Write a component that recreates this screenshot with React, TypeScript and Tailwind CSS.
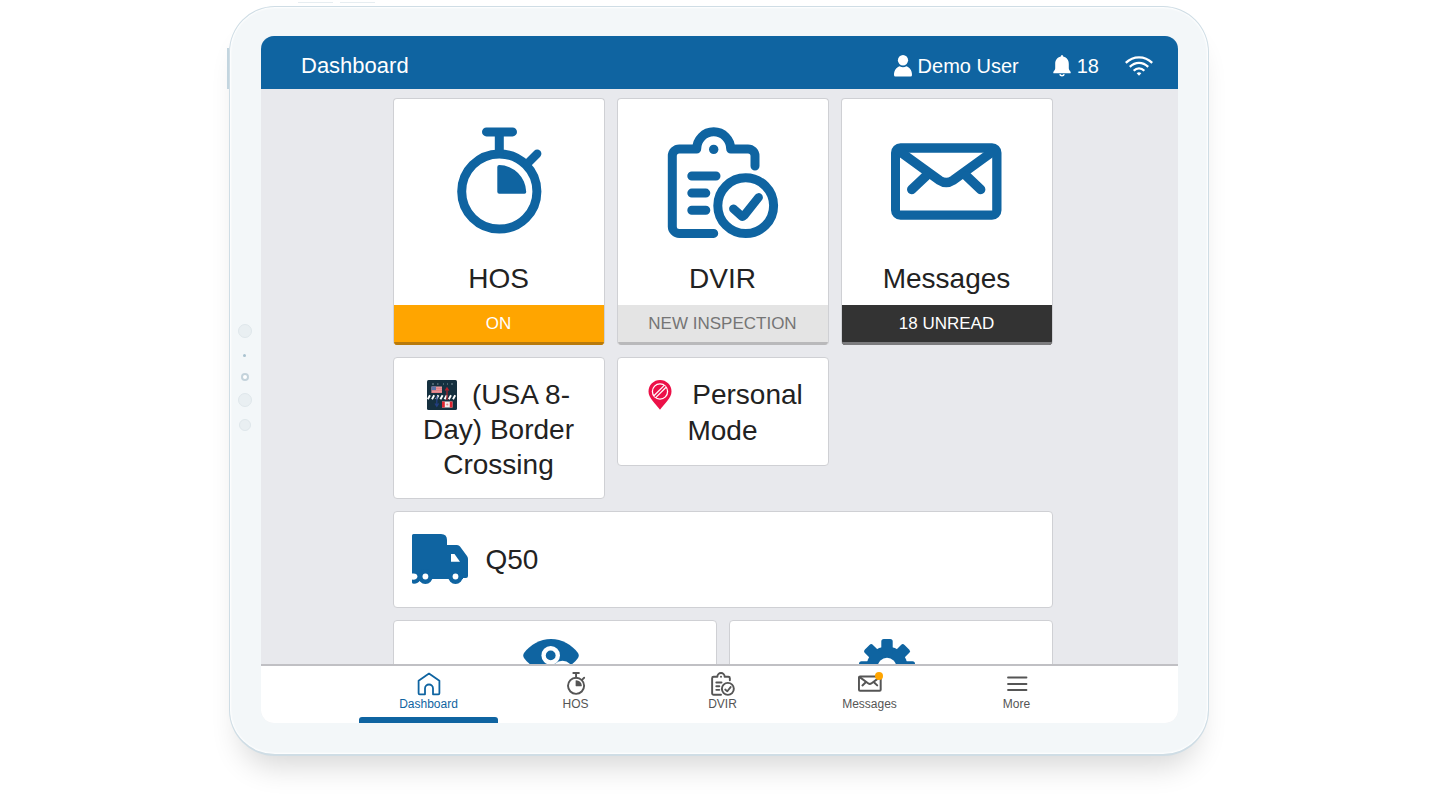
import type { ReactNode } from "react";

type IconProps = { className?: string };

function StopwatchIcon({ className }: IconProps) {
  return (
    <svg viewBox="0 0 112 112" className={className} fill="none" stroke="currentColor" strokeLinecap="round" aria-hidden="true">
      <circle cx="56.3" cy="64.5" r="37.6" strokeWidth="9" />
      <path d="M43.5 4.9H69.5M56.3 5V26" strokeWidth="9" />
      <path d="M94.2 26.8L84 37" strokeWidth="8.4" />
      <path d="M56.3 38Q54.3 38 54.3 40V64.7Q54.3 66.7 56.3 66.7H81.5Q83.4 66.7 83.2 64.6A27.6 27.6 0 0 0 56.3 38Z" fill="currentColor" stroke="none" />
    </svg>
  );
}

function ClipboardIcon({ className }: IconProps) {
  return (
    <svg viewBox="0 0 112 112" className={className} fill="none" stroke="currentColor" strokeWidth="9" strokeLinecap="round" strokeLinejoin="round" aria-hidden="true">
      <path d="M46.7 106.4H12.3a7 7 0 0 1-7-7V29a7 7 0 0 1 7-7H29.7a17 17.2 0 0 1 34 0H81a7 7 0 0 1 7 7V39" />
      <circle cx="46.7" cy="22.4" r="4.7" fill="currentColor" stroke="none" />
      <path d="M24.8 49H49M24.8 66.1H38.8M24.8 83.3H38.8" />
      <circle cx="78.7" cy="78.7" r="27.9" />
      <path d="M66.4 81.8L74.5 89Q75.8 90 77 88.7L91.6 70.4" strokeWidth="8.6" />
    </svg>
  );
}

function EnvelopeIcon({ className }: IconProps) {
  return (
    <svg viewBox="0 0 112 112" className={className} fill="none" stroke="currentColor" strokeWidth="9.4" strokeLinecap="round" aria-hidden="true">
      <path
        fill="currentColor"
        stroke="none"
        fillRule="evenodd"
        d="M9.5 16.3H101a9.5 9.5 0 0 1 9.5 9.5V83.2a9.5 9.5 0 0 1-9.5 9.5H9.5a9.5 9.5 0 0 1-9.5-9.5V25.8A9.5 9.5 0 0 1 9.5 16.3ZM9 25.8V83.4H101.2V25.8Z"
      />
      <path d="M8 24L48.5 53.4Q55.2 57.8 62 53.4L102.5 24" />
      <path d="M20.7 62.5L35 49M89.7 62.5L75.5 49" />
    </svg>
  );
}

function HomeIcon({ className }: IconProps) {
  return (
    <svg viewBox="0 0 24 24" className={className} fill="none" stroke="currentColor" strokeWidth="1.8" strokeLinejoin="round" aria-hidden="true">
      <path d="M1.6 8.8L12 1.6L22.4 8.8V21.2Q22.4 22.3 21.3 22.3H16V16.5A4 4 0 0 0 8 16.5V22.3H2.7Q1.6 22.3 1.6 21.2Z" />
    </svg>
  );
}

function MenuIcon({ className }: IconProps) {
  return (
    <svg viewBox="0 0 24 24" className={className} stroke="currentColor" strokeWidth="1.8" strokeLinecap="round" aria-hidden="true">
      <path d="M3 5.5H21.5M3 12H21.5M3 18H21.5" />
    </svg>
  );
}

function UserIcon({ className }: IconProps) {
  return (
    <svg viewBox="0 0 18 22" className={className} fill="currentColor" aria-hidden="true">
      <ellipse cx="9" cy="5.3" rx="5.1" ry="5.3" />
      <path d="M0 20C0 15.4 2.4 12.3 5.6 11.3Q9 13 12.4 11.3C15.600 12.3 18 15.4 18 20Q18 21.500 16.600 21.500H1.400Q0 21.500 0 20Z" />
    </svg>
  );
}

function BellIcon({ className }: IconProps) {
  return (
    <svg viewBox="0 0 18 22" className={className} fill="currentColor" aria-hidden="true">
      <path d="M9 0Q10.2 0 10.2 1.6C14 2.4 15.8 5.4 15.8 9V13.5Q15.9 15.2 17.4 16.6Q18 17.4 17.6 18.3H.4Q0 17.4.6 16.6Q2.1 15.2 2.2 13.5V9C2.2 5.4 4 2.4 7.8 1.6Q7.8 0 9 0Z" />
      <path d="M6.8 19.3A2.3 2.2 0 0 0 11.2 19.3" fill="none" stroke="currentColor" strokeWidth="1.5" />
    </svg>
  );
}

function WifiIcon({ className }: IconProps) {
  return (
    <svg viewBox="0 0 28 20" className={className} fill="none" stroke="currentColor" strokeWidth="2.3" aria-hidden="true">
      <path d="M.8 6.8Q6.5 1.3 14 1.3T27.2 6.8M4.8 10.8Q9 6.8 14 6.8T23.2 10.8M8.7 14.7Q11 12.3 14 12.3T19.3 14.7" />
      <path d="M11.7 17.3Q14 15.2 16.3 17.3L14 19.7Z" fill="currentColor" stroke="none" />
    </svg>
  );
}

function BorderIcon({ className }: IconProps) {
  return (
    <svg viewBox="0 0 30 30" className={className} aria-hidden="true">
      <rect width="30" height="30" rx="1.5" fill="#15303f" />
      <path d="M5 4H7M10 4H11.5M16 4H17M20 4H21M24 4H26" stroke="#7f929c" strokeWidth="1" />
      <rect x="4.5" y="6.5" width="10.5" height="6.5" fill="#f0a3a6" />
      <path d="M4.5 8.2H15M4.5 10.2H15M4.5 12.2H15" stroke="#d9646c" strokeWidth=".8" />
      <rect x="4.5" y="6.5" width="4.5" height="3.6" fill="#5b74a8" />
      <path d="M.8 19.2L3 15.2M5 19.2L7.2 15.2M9.2 19.2L11.4 15.2M13.4 19.2L15.6 15.2M17.6 19.2L19.8 15.2M21.8 19.2L24 15.2M26 19.2L28.2 15.2" stroke="#fff" strokeWidth="1.9" />
      <path d="M20 20V9M18.3 10.5L20 7.8L21.7 10.5" stroke="#b3202b" strokeWidth="1.2" fill="none" />
      <path d="M9.8 16V26M8 23.5L9.8 26.3L11.6 23.5" stroke="#233f80" strokeWidth="1.3" fill="none" />
      <rect x="15" y="21.5" width="10.5" height="6" fill="#f5eeee" />
      <path d="M15 21.5H17.8V27.5H15ZM22.8 21.5H25.5V27.5H22.8Z" fill="#dd2430" />
      <circle cx="20.3" cy="24.5" r="1.1" fill="#e8888e" />
    </svg>
  );
}

function PinIcon({ className }: IconProps) {
  return (
    <svg viewBox="-3 0 30 30" className={className} aria-hidden="true">
      <path d="M15 0A11.5 11.5 0 0 1 26.5 11.5C26.5 18 19.5 23.5 15 29.7C10.5 23.5 3.5 18 3.5 11.5A11.5 11.5 0 0 1 15 0Z" fill="#ec1148" />
      <g fill="none" stroke="#fff">
        <circle cx="15" cy="11.5" r="7.6" strokeWidth="1.3" />
        <path d="M20.2 6.3L9.8 16.7" strokeWidth="3.8" />
        <path d="M20.2 6.3L9.8 16.7" stroke="#ec1148" strokeWidth="1.4" />
      </g>
    </svg>
  );
}

function TruckIcon({ className }: IconProps) {
  return (
    <svg viewBox="0 0 56 50" className={className} fill="currentColor" aria-hidden="true">
      <path d="M0 1.5Q0 0 1.5 0H29Q35 0 35 6V11H45Q47 11 48 12.5L55 22Q56 23.3 56 25V42Q56 44 54 44H51V45H0Z" />
      <circle cx="13.4" cy="42.5" r="7.4" />
      <circle cx="43.5" cy="42.5" r="7.4" />
      <path d="M0 45H8.5V46Q6 49.800 2 49.800Q0 49.800 0 48.500Z" />
      <path d="M39 20H42.5L48 27.7H39Z" fill="#fff" />
      <path d="M0 39.6Q5.400 39 5.400 42.500T0 45.600Z" fill="#fff" />
      <circle cx="13.4" cy="42.5" r="2.9" fill="#fff" />
      <circle cx="43.5" cy="42.5" r="2.9" fill="#fff" />
      <path d="M5.5 50L7.7 47.3L10 50Z" fill="#fff" />
    </svg>
  );
}

function EyeIcon({ className }: IconProps) {
  return (
    <svg viewBox="0 0 56 40" className={className} fill="currentColor" aria-hidden="true">
      <path d="M28 0C39 0 49 6 55 14Q56.5 16.5 55 19C49 27 39 33 28 33S7 27 1 19Q-.5 16.5 1 14C7 6 17 0 28 0Z" />
      <circle cx="27.7" cy="16.4" r="9.3" fill="#fff" />
      <circle cx="27.7" cy="16.4" r="4.9" />
      <circle cx="39.5" cy="32" r="10.3" fill="#fff" />
    </svg>
  );
}

function GearIcon({ className }: IconProps) {
  return (
    <svg viewBox="0 0 56 56" className={className} fill="currentColor" aria-hidden="true">
      <circle cx="28" cy="28" r="20.5" />
      {[0, 45, 90, 135].map((angle) => (
        <rect key={angle} x="22.3" y="0" width="11.4" height="56" rx="2.5" transform={`rotate(${angle} 28 28)`} />
      ))}
      <circle cx="28" cy="28" r="9.3" fill="#fff" />
    </svg>
  );
}

const cardFrame = "rounded-[4px] border border-[#cfd0d4] bg-white";

function FeatureCard({ icon, title, status, statusStyle }: { icon: ReactNode; title: string; status: string; statusStyle: string }) {
  return (
    <button type="button" className="flex flex-col overflow-hidden rounded-[4px] border border-b-0 border-[#cfd0d4] bg-white pt-7 text-center">
      <span className="flex justify-center text-[#0f64a1]">{icon}</span>
      <span className="mt-[22px] mb-[9px] block w-full text-[28px] leading-[35px]">{title}</span>
      <span className={`block w-full border-b-3 text-[17px] leading-[37px] ${statusStyle}`}>{status}</span>
    </button>
  );
}

const navItems = [
  { label: "Dashboard", Icon: HomeIcon, active: true, badge: false },
  { label: "HOS", Icon: StopwatchIcon, active: false, badge: false },
  { label: "DVIR", Icon: ClipboardIcon, active: false, badge: false },
  { label: "Messages", Icon: EnvelopeIcon, active: false, badge: true },
  { label: "More", Icon: MenuIcon, active: false, badge: false },
];

export default function App() {
  return (
    <div className="flex h-screen justify-center overflow-hidden bg-white pt-1.5 pr-0.5 pb-[54px] font-['Liberation_Sans',Arial,sans-serif] text-[#222]">
      <div className="relative flex w-full max-w-[980px] rounded-[46px] border border-b-2 border-[#cfdde5] bg-[#f3f7f9] pt-[29px] pr-[30px] pb-[31px] shadow-[inset_0_0_2px_1px_#ffffff,0_22px_30px_-12px_rgba(0,0,0,0.16)]">
        <span className="absolute top-[41px] -left-[3px] h-[41px] w-0.5 bg-[#c3d5df]" />
        <span className="absolute -top-[5px] left-[68px] h-px w-[35px] bg-[#e6edf1]" />
        <span className="absolute -top-[5px] left-[110px] h-px w-[35px] bg-[#e6edf1]" />

        <div className="flex w-[31px] shrink-0 flex-col items-center justify-center gap-3 pr-0.5 pb-1" aria-hidden="true">
          <span className="size-3.5 rounded-full border border-[#dfe7eb] bg-[#e9eff2]" />
          <span className="my-1 size-[3px] rounded-full bg-[#a9c2cf]" />
          <span className="size-2 rounded-full border-2 border-[#c4d3db] bg-white" />
          <span className="size-3.5 rounded-full border border-[#dfe7eb] bg-[#e9eff2]" />
          <span className="size-3 rounded-full border border-[#dfe7eb] bg-[#e9eff2]" />
        </div>

        <div className="flex min-w-0 flex-1 flex-col overflow-hidden rounded-[13px] bg-[#e8e9ed]">
          <header className="flex h-[53px] shrink-0 items-center bg-[#0f64a1] pt-[7px] pr-[25px] pl-10 text-xl text-white">
            <h1 className="text-[22px]">Dashboard</h1>
            <button type="button" className="ml-auto flex items-center gap-1.5">
              <UserIcon className="h-[22px] w-[18px]" />
              Demo User
            </button>
            <button type="button" aria-label="18 notifications" className="ml-[34px] flex items-center gap-1.5">
              <BellIcon className="h-[22px] w-[18px]" />
              18
            </button>
            <WifiIcon className="ml-[26px] h-5 w-7" />
          </header>

          <main className="min-h-0 flex-1 overflow-y-auto pt-[9px] pl-1.5 [scrollbar-width:none]">
            <div className="mx-auto flex max-w-[660px] flex-col gap-3">
              <div className="grid grid-cols-3 gap-3">
                <FeatureCard icon={<StopwatchIcon className="size-28" />} title="HOS" status="ON" statusStyle="border-[#b87a0c] bg-[#ffa500] text-white" />
                <FeatureCard icon={<ClipboardIcon className="size-28" />} title="DVIR" status="NEW INSPECTION" statusStyle="border-[#b9b9bb] bg-[#e4e4e4] text-[#757575]" />
                <FeatureCard icon={<EnvelopeIcon className="size-28" />} title="Messages" status="18 UNREAD" statusStyle="border-[#7c7c7e] bg-[#333] text-white" />
              </div>

              <div className="grid grid-cols-3 items-start gap-3">
                <button type="button" className={`px-4 pt-[19px] pb-4 text-[28px] leading-[35px] ${cardFrame}`}>
                  <BorderIcon className="mr-[15px] inline-block size-[30px] align-[-6px]" />
                  (USA 8-Day) Border Crossing
                </button>
                <button type="button" className={`px-4 pt-[19px] pb-4 text-[28px] leading-9 ${cardFrame}`}>
                  <PinIcon className="mr-5 inline-block size-[30px] align-[-6px]" />
                  Personal Mode
                </button>
              </div>

              <button type="button" className={`flex h-[97px] items-center gap-[18px] px-[18px] text-[28px] ${cardFrame}`}>
                <TruckIcon className="mb-0.5 h-[50px] w-14 text-[#0f64a1]" />
                Q50
              </button>

              <div className="grid grid-cols-2 gap-3 pb-3">
                <button type="button" aria-label="View" className={`flex h-24 justify-center pt-[18px] pr-2 text-[#0f64a1] ${cardFrame}`}>
                  <EyeIcon className="h-10 w-14" />
                </button>
                <button type="button" aria-label="Settings" className={`flex h-24 justify-center pt-[18px] pr-2 text-[#0f64a1] ${cardFrame}`}>
                  <GearIcon className="size-14" />
                </button>
              </div>
            </div>
          </main>

          <nav className="shrink-0 border-t-2 border-[#c0c0c4] bg-white pl-1.5">
            <div className="mx-auto grid max-w-[727px] grid-cols-5 gap-2">
              {navItems.map(({ label, Icon, active, badge }) => (
                <a key={label} href="#" className={`flex flex-col items-center pt-1.5 text-xs ${active ? "text-[#0f64a1]" : "text-[#555]"}`}>
                  <span className="relative">
                    <Icon className="size-6" />
                    {badge && <span className="absolute top-0 -right-px size-2 rounded-full bg-[#ffa500]" />}
                  </span>
                  <span className="leading-4">{label}</span>
                  <span className={`mt-[5px] h-1.5 w-full rounded-t-[3px] ${active ? "bg-[#0f64a1]" : "bg-white"}`} />
                </a>
              ))}
            </div>
          </nav>
        </div>
      </div>
    </div>
  );
}
